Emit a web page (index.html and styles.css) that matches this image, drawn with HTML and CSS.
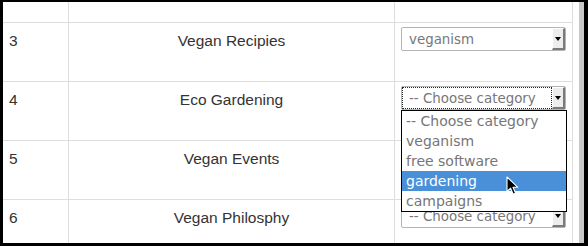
FILE: index.html
```html
<!DOCTYPE html>
<html>
<head>
<meta charset="utf-8">
<link rel="stylesheet" href="styles.css">
</head>
<body>
<div class="window">
  <div class="viewport">
    <div class="table">
      <div class="row row-partial">
        <div class="cell"></div>
        <div class="cell"></div>
        <div class="cell"></div>
      </div>
      <div class="row">
        <div class="cell num">3</div>
        <div class="cell title">Vegan Recipies</div>
        <div class="cell pick">
          <div class="select"><span class="label">veganism</span><span class="btn"><i class="arrow"></i></span></div>
        </div>
      </div>
      <div class="row">
        <div class="cell num">4</div>
        <div class="cell title">Eco Gardening</div>
        <div class="cell pick">
          <div class="select open"><span class="label focus">-- Choose category</span><span class="btn"><i class="arrow"></i></span>
            <ul class="popup">
              <li>-- Choose category</li>
              <li>veganism</li>
              <li>free software</li>
              <li class="hl">gardening</li>
              <li>campaigns</li>
              <svg class="cursor" width="13" height="20" viewBox="0 0 13 20"><path d="M1 1 L1 15.5 L4.6 12.2 L7.2 18.2 L9.6 17.2 L7 11.3 L11.8 11.3 Z" fill="#000" stroke="#fff" stroke-width="1.1" stroke-linejoin="round"/></svg>
            </ul>
          </div>
        </div>
      </div>
      <div class="row">
        <div class="cell num">5</div>
        <div class="cell title">Vegan Events</div>
        <div class="cell pick">
          <div class="select"><span class="label covered">-- Choose category</span><span class="btn"><i class="arrow"></i></span></div>
        </div>
      </div>
      <div class="row">
        <div class="cell num">6</div>
        <div class="cell title">Vegan Philosphy</div>
        <div class="cell pick">
          <div class="select"><span class="label">-- Choose category</span><span class="btn"><i class="arrow"></i></span></div>
        </div>
      </div>
    </div>
  </div>
  <div class="scrollbar"></div>
</div>
</body>
</html>
```
FILE: styles.css
```css
* { box-sizing: border-box; }
html, body { margin: 0; padding: 0; }
body { background: #000; width: 588px; height: 246px; overflow: hidden; }

.window {
  margin: 2px 4px 3px 3px;
  width: 581px;
  height: 241px;
  background: #fff;
  display: flex;
  overflow: hidden;
}
.viewport { width: 576px; height: 241px; overflow: hidden; }
.scrollbar { width: 5px; height: 241px; background: #c9c9c9; }

.table { width: 570px; font-family: "DejaVu Sans", sans-serif; }
.row {
  display: grid;
  grid-template-columns: 66px 326px 178px;
  height: 59px;
  border-bottom: 1px solid #dddddd;
}
.row-partial { height: 21px; }
.cell { border-right: 1px solid #dddddd; }

.num, .title {
  padding: 8px 6px;
  font-family: "Liberation Sans", Arial, sans-serif;
  font-size: 15.5px;
  line-height: 20px;
  color: #333;
}
.title { text-align: center; }
.pick { padding: 4px 6px 0; }

.select {
  position: relative;
  width: 165px;
  height: 24px;
  border: 1px solid #b4b4b4;
  border-radius: 2px;
  display: flex;
  align-items: stretch;
  background: #fff;
  font-size: 13.4px;
  color: #777;
}
.label {
  flex: 1;
  display: flex;
  align-items: center;
  padding-left: 6px;
  border: 1px solid transparent;
  white-space: nowrap;
  overflow: hidden;
}
.label.focus { border: 1px dotted #222; }
.label.covered { visibility: hidden; }
.btn {
  width: 13px;
  display: flex;
  justify-content: center;
  align-items: center;
  background: #ededed;
  border-top: 1px solid #fff;
  border-left: 1px solid #fff;
  border-right: 2px solid #7a7a7a;
  border-bottom: 2px solid #7a7a7a;
}
.arrow {
  width: 0; height: 0;
  border-left: 3px solid transparent;
  border-right: 3px solid transparent;
  border-top: 4px solid #000;
}

.popup {
  position: absolute;
  left: -1px;
  top: calc(100% + 1px);
  width: 166px;
  margin: 0;
  padding: 0;
  list-style: none;
  background: #fff;
  border: 1px solid #000;
  font-size: 14px;
  color: #767676;
  z-index: 5;
}
.popup li {
  height: 20px;
  line-height: 20px;
  padding-left: 4px;
  white-space: nowrap;
}
.popup li.hl { background: #4a90d9; color: #fff; }
.cursor { position: absolute; left: 104px; top: 65px; }
```
